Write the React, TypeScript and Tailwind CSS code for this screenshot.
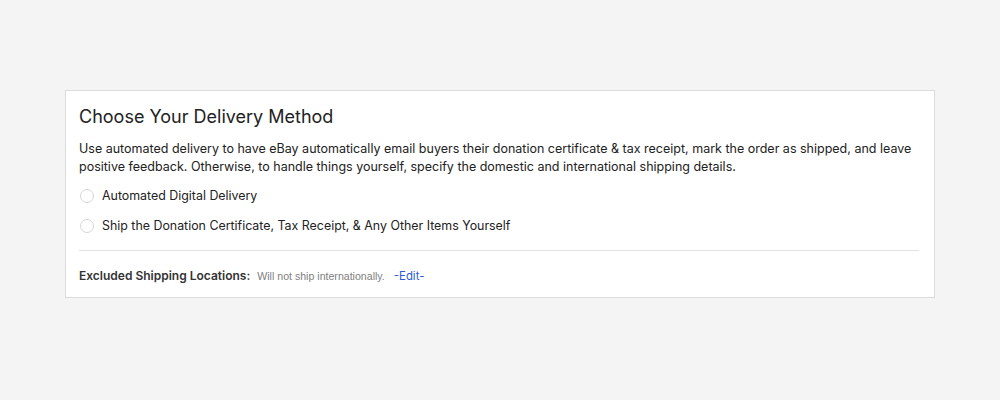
import React from "react";

const options = [
  "Automated Digital Delivery",
  "Ship the Donation Certificate, Tax Receipt, & Any Other Items Yourself",
];

export default function App() {
  return (
    <div className="w-[1000px] h-[400px] bg-[#f4f4f4] pt-[90px] pl-[65px] font-['Inter',sans-serif]">
      <div className="w-[870px] h-[208px] bg-white border border-[#dcdcdc] px-[13px] pt-[14px]">
        <h2 className="text-[18px] leading-[24px] text-[#222] font-normal">Choose Your Delivery Method</h2>
        <p className="mt-[11px] text-[12.5px] leading-[18px] text-[#222]">
          Use automated delivery to have eBay automatically email buyers their donation certificate &amp; tax receipt, mark the order as shipped, and leave positive feedback. Otherwise, to handle things yourself, specify the domestic and international shipping details.
        </p>
        <div className="mt-[11px] flex flex-col gap-[12px]">
          {options.map((o) => (
            <label key={o} className="flex items-center h-[18px]">
              <span className="w-[14px] h-[14px] rounded-full border border-[#d6d6d6] bg-white ml-[1px]" />
              <span className="ml-[8px] text-[12.4px] text-[#222]">{o}</span>
            </label>
          ))}
        </div>
        <div className="mt-[15px] mr-[2px] h-px bg-[#e2e2e2]" />
        <div className="mt-[16px] flex items-baseline">
          <span className="text-[12px] text-[#333] font-semibold">Excluded Shipping Locations:</span>
          <span className="ml-[7px] text-[#808080] font-['Liberation_Sans',sans-serif] text-[10.6px]">Will not ship internationally.</span>
          <a className="ml-[9px] text-[#2a5bd7] text-[11.4px]">-Edit-</a>
        </div>
      </div>
    </div>
  );
}
